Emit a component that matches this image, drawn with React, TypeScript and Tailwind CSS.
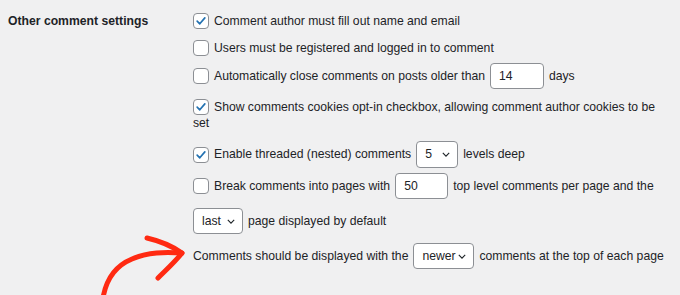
import { ReactNode } from "react"

function Checkbox({ checked }: { checked?: boolean }) {
  return (
    <span className="flex h-[16px] w-[16px] shrink-0 items-center justify-center rounded-[4px] border border-[#8c8f94] bg-white">
      {checked && (
        <svg viewBox="0 0 16 16" className="h-[14px] w-[14px]">
          <path d="M3.6 8.2 L6.6 11.2 L12.4 4.4" fill="none" stroke="#2271b1" strokeWidth="1.9" strokeLinecap="round" strokeLinejoin="round" />
        </svg>
      )}
    </span>
  )
}

function TextBox({ value, width }: { value: string; width: string }) {
  return (
    <span className={`flex h-[26px] shrink-0 items-center rounded-[4px] border border-[#8c8f94] bg-white pl-[8px] ${width}`}>
      {value}
    </span>
  )
}

function Select({ value, width }: { value: string; width: string }) {
  return (
    <span className={`flex h-[26px] shrink-0 items-center justify-between rounded-[4px] border border-[#8c8f94] bg-white pl-[8px] pr-[7px] ${width}`}>
      <span>{value}</span>
      <svg viewBox="0 0 10 6" className="h-[5px] w-[8px] shrink-0">
        <path d="M1 1 L5 5 L9 1" fill="none" stroke="#1d2327" strokeWidth="1.4" />
      </svg>
    </span>
  )
}

function Row({ children, className = "" }: { children: ReactNode; className?: string }) {
  return <div className={`flex items-center gap-[5px] whitespace-nowrap ${className}`}>{children}</div>
}

export default function App() {
  return (
    <div
      className="relative h-[295px] w-[680px] overflow-hidden bg-[#f0f0f1] text-[12.2px] text-[#1d2327]"
      style={{ fontFamily: "'Liberation Sans', Arial, sans-serif" }}
    >
      <div className="flex">
        <div className="w-[193px] shrink-0 pl-[8px] pt-[8px]">
          <div className="flex h-[26px] items-center font-bold">Other comment settings</div>
        </div>

        <div className="flex flex-col pt-[8px]">
          <Row className="h-[26px]">
            <Checkbox checked />
            <span>Comment author must fill out name and email</span>
          </Row>
          <Row className="h-[28px]">
            <Checkbox />
            <span>Users must be registered and logged in to comment</span>
          </Row>
          <Row className="h-[28px]">
            <Checkbox />
            <span>Automatically close comments on posts older than</span>
            <TextBox value="14" width="w-[54px]" />
            <span>days</span>
          </Row>
          <div className="mt-[9px] flex flex-col whitespace-nowrap leading-[16px]">
            <div className="flex items-center gap-[5px]">
              <Checkbox checked />
              <span>Show comments cookies opt-in checkbox, allowing comment author cookies to be</span>
            </div>
            <span>set</span>
          </div>
          <Row className="mt-[10px] h-[27px]">
            <Checkbox checked />
            <span>Enable threaded (nested) comments</span>
            <Select value="5" width="w-[42px] h-[27px]" />
            <span>levels deep</span>
          </Row>
          <Row className="mt-[5px] h-[26px]">
            <Checkbox />
            <span>Break comments into pages with</span>
            <TextBox value="50" width="w-[53px]" />
            <span>top level comments per page and the</span>
          </Row>
          <Row className="mt-[9px] h-[26px]">
            <Select value="last" width="w-[50px]" />
            <span>page displayed by default</span>
          </Row>
          <Row className="mt-[9px] h-[26px]">
            <span>Comments should be displayed with the</span>
            <Select value="newer" width="w-[61px]" />
            <span>comments at the top of each page</span>
          </Row>
        </div>
      </div>

      <svg className="absolute left-0 top-0" width="680" height="295" viewBox="0 0 680 295">
        <g fill="none" stroke="#ff2a12" strokeWidth="5" strokeLinecap="round" strokeLinejoin="round">
          <path d="M103 298 C106 280 115 266 132 259 C148 252 165 252 182 253" />
          <path d="M147 238 C160 241 172 246 182 253 C175 262 166 270 158 278" />
        </g>
      </svg>
    </div>
  )
}
